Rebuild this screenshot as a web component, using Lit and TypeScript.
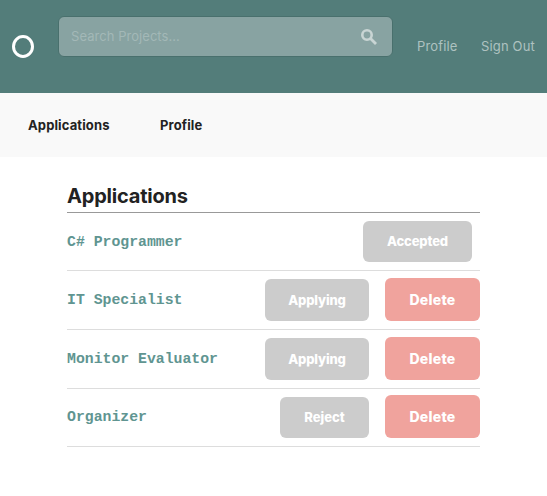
import { LitElement, html, css } from "lit";
import { customElement } from "lit/decorators.js";

interface Application {
  title: string;
  status: string;
  removable: boolean;
}

const applications: Application[] = [
  { title: "C# Programmer", status: "Accepted", removable: false },
  { title: "IT Specialist", status: "Applying", removable: true },
  { title: "Monitor Evaluator", status: "Applying", removable: true },
  { title: "Organizer", status: "Reject", removable: true },
];

@customElement("app-root")
export class AppRoot extends LitElement {
  static styles = css`
    :host {
      display: block;
      height: 496px;
      overflow: hidden;
      background: #fff;
      color: #222;
      font: 13px/20px Inter, "Liberation Sans", sans-serif;
    }
    * { box-sizing: border-box; }
    header {
      height: 93px;
      background: #537d7a;
      display: flex;
      align-items: flex-start;
    }
    .logo { margin: 35px 0 0 12px; width: 22px; height: 23px; flex: none; }
    .search {
      margin: 16px 0 0 24px;
      width: 335px;
      height: 41px;
      flex: none;
      border: 1px solid #49706d;
      border-radius: 6px;
      background: #88a3a2;
      display: flex;
      align-items: center;
      padding: 0 14px 0 12px;
      justify-content: space-between;
      color: #a3b8b7;
      letter-spacing: 0.05px;
    }
    .search svg { width: 18px; height: 18px; }
    .search span { padding-bottom: 1px; }
    .links { display: flex; margin: 36px 0 0 24px; gap: 24px; color: #aec2c0; letter-spacing: 0.16px; white-space: nowrap; }
    .links span:first-child { width: 40px; }
    nav {
      height: 64px;
      background: #f9f9f9;
      display: flex;
      align-items: center;
      gap: 51px;
      padding: 0 28px;
      font-weight: 700;
      letter-spacing: 0.12px;
    }
    nav span:first-child { width: 81px; }
    main { width: 413px; margin-left: 67px; }
    h1 { margin: 0; height: 56px; padding-top: 26px; border-bottom: 1px solid #999; font-size: 20px; line-height: 26px; font-weight: 700; letter-spacing: -0.2px; }
    .row { height: 59px; border-bottom: 1px solid #ddd; display: flex; align-items: flex-start; }
    .row:first-child, .row:last-child { height: 58px; }
    .title { flex: 1; padding-top: 19px; color: #609591; font: bold 14.8px/20px "Liberation Mono", monospace; }
    .row:last-child .title { padding-top: 18px; }
    .status, .delete { display: flex; align-items: center; justify-content: center; border-radius: 6px; color: #fff; font-weight: 800; white-space: nowrap; }
    .status { margin-top: 8px; height: 42px; background: #ccc; width: 104px; letter-spacing: -0.15px; }
    .row:first-child .status { width: 109px; height: 41px; margin-right: 8px; padding-bottom: 1px; }
    .row:last-child .status { width: 89px; height: 41px; padding-bottom: 1px; letter-spacing: 0; }
    .delete { margin: 7px 0 0 16px; height: 43px; width: 95px; background: #f0a39d; font-size: 14px; letter-spacing: 0.25px; }
    .row:last-child .delete { margin-top: 6px; }
  `;

  render() {
    return html`
      <header>
        <svg class="logo" viewBox="0 0 22 23"><ellipse cx="11" cy="11.5" rx="9.5" ry="10" fill="none" stroke="#fff" stroke-width="3" /></svg>
        <div class="search">
          <span>Search Projects...</span>
          <svg viewBox="0 0 18 18" fill="none" stroke="#c9d5d4"><circle cx="7" cy="7" r="4.7" stroke-width="2.6" /><path d="M10.5 10.5 16 16" stroke-width="2.8" /></svg>
        </div>
        <div class="links"><span>Profile</span><span>Sign Out</span></div>
      </header>
      <nav><span>Applications</span><span>Profile</span></nav>
      <main>
        <h1>Applications</h1>
        <section>
          ${applications.map(
            (a) => html`<div class="row">
              <span class="title">${a.title}</span>
              <span class="status">${a.status}</span>
              ${a.removable ? html`<span class="delete">Delete</span>` : null}
            </div>`
          )}
        </section>
      </main>
    `;
  }
}
